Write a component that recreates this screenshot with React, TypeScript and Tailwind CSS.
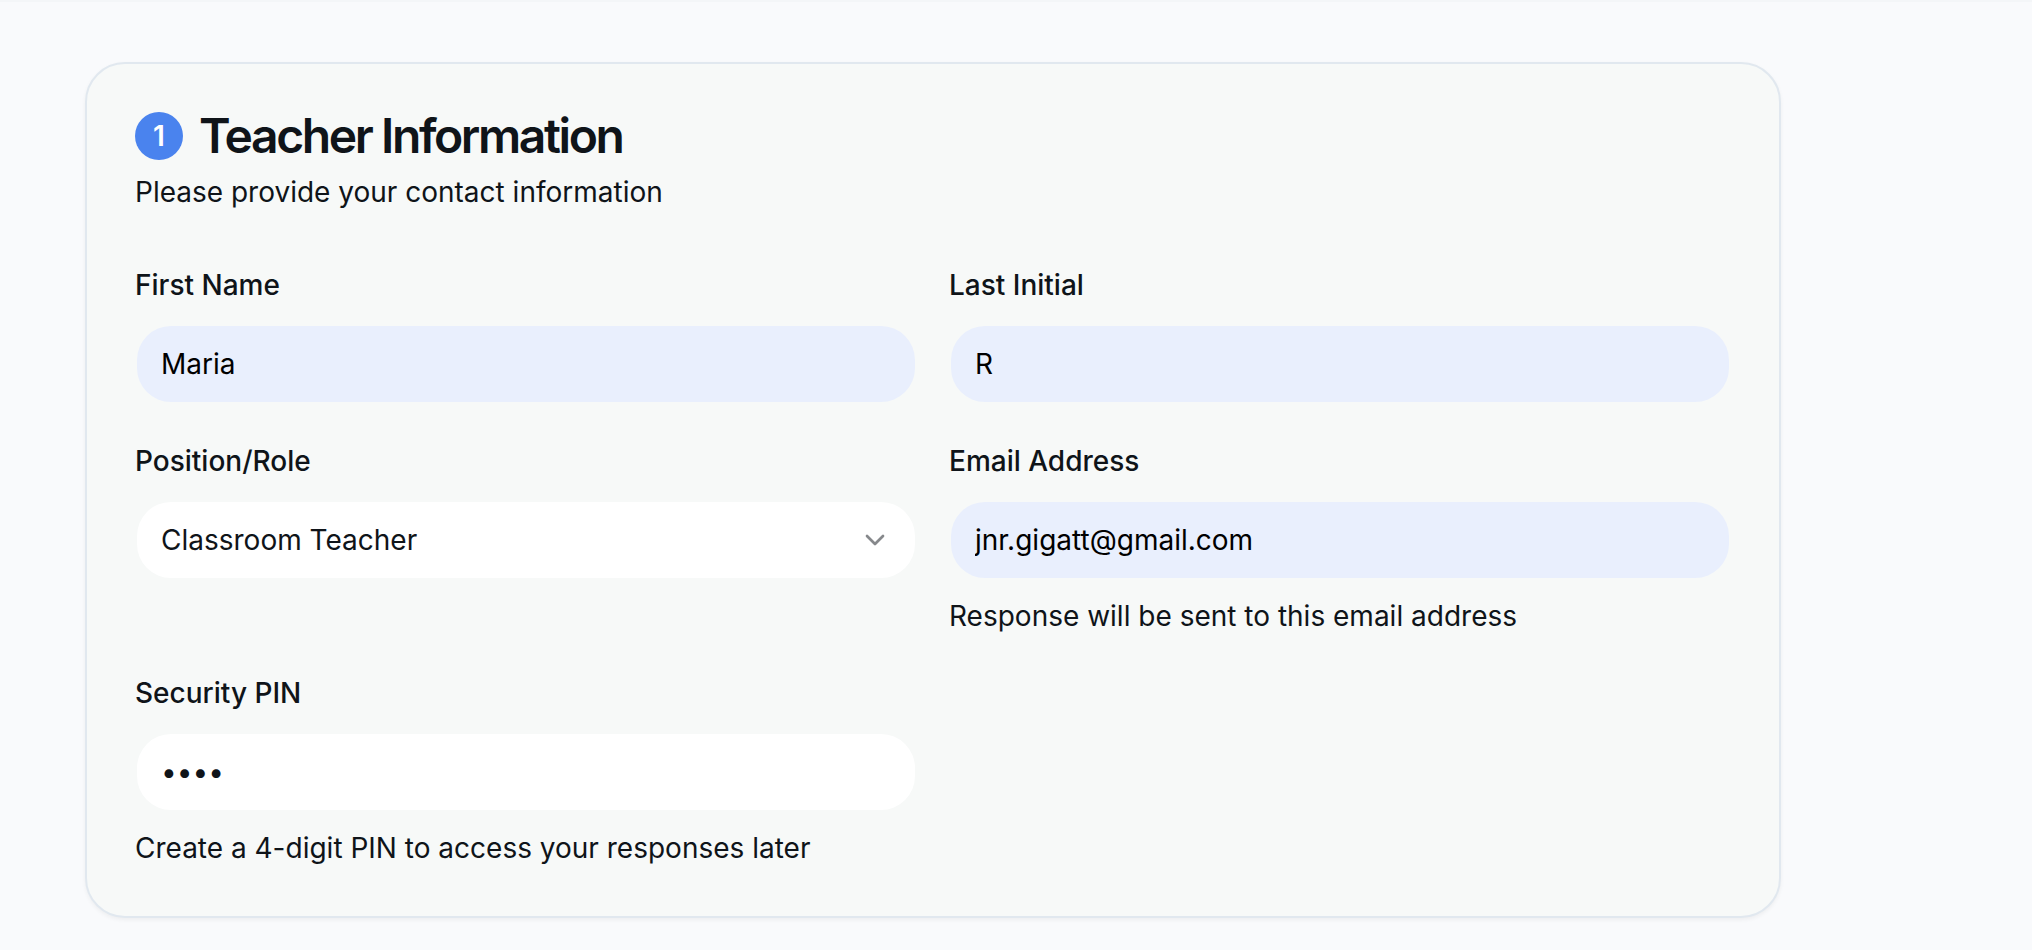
import type { InputHTMLAttributes, ReactNode } from "react";
import { ChevronDown } from "lucide-react";

const CONTROL =
  "h-20 w-full rounded-[36px] border-2 border-transparent bg-clip-padding px-6 text-[28px] leading-10 outline-none";

function Field({ id, label, hint, children }: { id: string; label: string; hint?: string; children: ReactNode }) {
  return (
    <div className="flex flex-col gap-4">
      <label htmlFor={id} className="pt-0.5 text-[28px] font-medium leading-[46px]">
        {label}
      </label>
      {children}
      {hint && (
        <p id={`${id}-hint`} className="text-[28px] leading-10">
          {hint}
        </p>
      )}
    </div>
  );
}

function TextInput({ filled, ...props }: InputHTMLAttributes<HTMLInputElement> & { filled?: boolean }) {
  return <input {...props} className={`${CONTROL} ${filled ? "bg-[#e9effd] text-black" : "bg-white"}`} />;
}

export default function App() {
  return (
    <div className="min-h-screen border-t-2 border-[#f4f6f8] bg-[#f9fafc] pr-12 pb-8 pl-[85px] pt-[60px] font-['Inter',sans-serif] text-[#0f1419]">
      <section className="w-full max-w-[1696px] rounded-[40px] border-2 border-[#e1e8ef] bg-[#f7f9f8] p-12 shadow-[0_2px_4px_rgba(0,0,0,0.05)]">
        <header className="flex flex-col gap-3">
          <h2 className="flex items-center gap-4 text-5xl leading-12 font-semibold tracking-tighter">
            <span className="flex size-12 items-center justify-center rounded-full bg-[#4a83ee] text-[28px] font-semibold tracking-normal text-white">
              1
            </span>
            Teacher Information
          </h2>
          <p className="text-[28px] leading-10">Please provide your contact information</p>
        </header>
        <form className="mt-12 grid grid-cols-2 gap-8">
          <Field id="first-name" label="First Name">
            <TextInput id="first-name" defaultValue="Maria" filled />
          </Field>
          <Field id="last-initial" label="Last Initial">
            <TextInput id="last-initial" defaultValue="R" filled />
          </Field>
          <Field id="role" label="Position/Role">
            <div className="relative">
              <select id="role" className={`${CONTROL} appearance-none bg-white`}>
                <option>Classroom Teacher</option>
              </select>
              <ChevronDown className="pointer-events-none absolute top-6 right-[26px] size-8 text-[#0f1419] opacity-50" />
            </div>
          </Field>
          <Field id="email" label="Email Address" hint="Response will be sent to this email address">
            <TextInput id="email" type="email" defaultValue="jnr.gigatt@gmail.com" filled />
          </Field>
          <Field id="pin" label="Security PIN" hint="Create a 4-digit PIN to access your responses later">
            <TextInput id="pin" type="password" defaultValue="1234" maxLength={4} />
          </Field>
        </form>
      </section>
    </div>
  );
}
